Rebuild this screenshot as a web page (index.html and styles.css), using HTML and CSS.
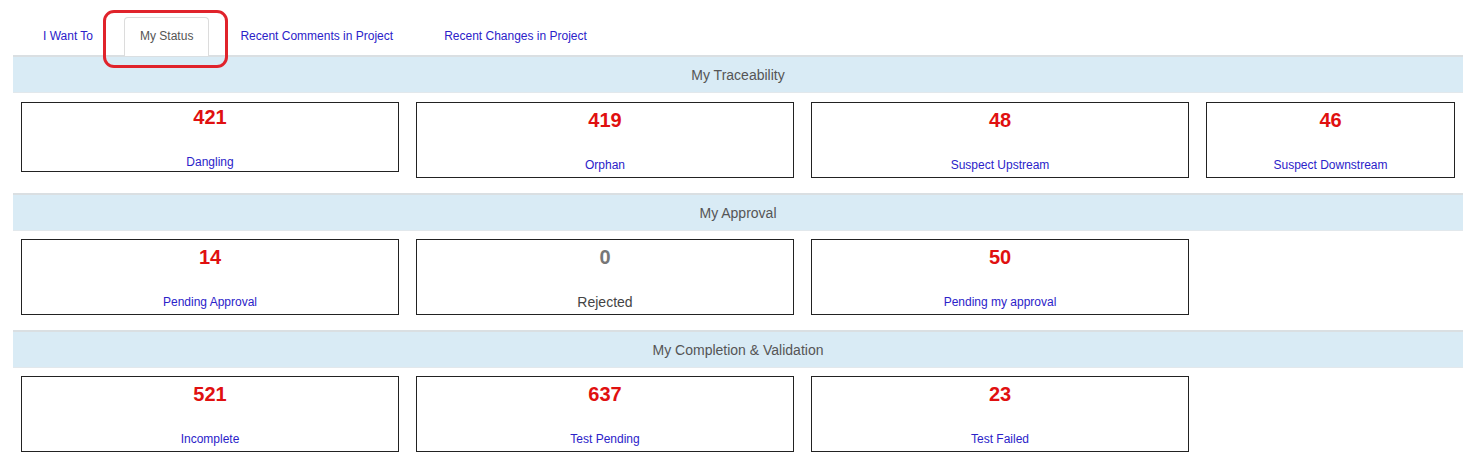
FILE: index.html
```html
<!DOCTYPE html>
<html>
<head>
<meta charset="utf-8">
<link rel="stylesheet" href="styles.css">
</head>
<body>
<div class="page">
  <div class="nav">
    <a class="tab">I Want To</a>
    <a class="tab active">My Status</a>
    <a class="tab">Recent Comments in Project</a>
    <a class="tab tab-last">Recent Changes in Project</a>
    <div class="highlight"></div>
  </div>

  <div class="section section-first">
    <div class="section-head">My Traceability</div>
    <div class="cards">
      <div class="card card-short"><div class="num">421</div><div class="label">Dangling</div></div>
      <div class="card"><div class="num">419</div><div class="label">Orphan</div></div>
      <div class="card"><div class="num">48</div><div class="label">Suspect Upstream</div></div>
      <div class="card"><div class="num">46</div><div class="label">Suspect Downstream</div></div>
    </div>
  </div>

  <div class="section">
    <div class="section-head">My Approval</div>
    <div class="cards">
      <div class="card"><div class="num">14</div><div class="label">Pending Approval</div></div>
      <div class="card"><div class="num num-zero">0</div><div class="label label-plain">Rejected</div></div>
      <div class="card"><div class="num">50</div><div class="label">Pending my approval</div></div>
    </div>
  </div>

  <div class="section">
    <div class="section-head">My Completion &amp; Validation</div>
    <div class="cards">
      <div class="card"><div class="num">521</div><div class="label">Incomplete</div></div>
      <div class="card"><div class="num">637</div><div class="label">Test Pending</div></div>
      <div class="card"><div class="num">23</div><div class="label">Test Failed</div></div>
    </div>
  </div>
</div>
</body>
</html>
```

FILE: styles.css
```css
* { box-sizing: border-box; }

body {
  margin: 0;
  background: #fff;
  font-family: "Liberation Sans", Arial, sans-serif;
}

.page {
  padding: 0 15px 0 13px;
}

.nav {
  position: relative;
  display: flex;
  gap: 15px;
  padding: 17px 0 0 14px;
  height: 55px;
}

.tab {
  display: block;
  padding: 9px 15px 11px;
  line-height: 18px;
  font-size: 12px;
  color: #2b22c9;
  border: 1px solid transparent;
  border-bottom: none;
  border-radius: 4px 4px 0 0;
  height: 38px;
  position: relative;
  z-index: 1;
}

.tab-last {
  margin-left: 4px;
}

.tab.active {
  color: #555;
  background: #fff;
  border-color: #dcdcdc;
  height: 39px;
}

.highlight {
  position: absolute;
  left: 90px;
  top: 10px;
  width: 125px;
  height: 58px;
  border: 3.5px solid #e0232b;
  border-radius: 11px;
  z-index: 2;
}

.section-head {
  height: 38px;
  background: #d9ebf5;
  border-top: 2px solid #dadfe2;
  border-bottom: 1px solid #e2e8ec;
  text-align: center;
  font-size: 14px;
  line-height: 36px;
  color: #555;
}

.cards {
  display: grid;
  grid-template-columns: 378px 378px 378px 249px;
  column-gap: 17px;
  align-items: start;
  padding: 0 8px;
  margin: 8px 0 15px;
}

.section-first .cards {
  margin-top: 9px;
}

.card {
  height: 76px;
  border: 1px solid #222;
  padding-top: 5px;
  text-align: center;
}

.card-short {
  height: 70px;
  padding-top: 2px;
}

.num {
  font-size: 20px;
  font-weight: bold;
  line-height: 24px;
  color: #e01010;
}

.num-zero {
  color: #777;
}

.label {
  margin-top: 25px;
  font-size: 12px;
  line-height: 16px;
  color: #2b22c9;
}

.label-plain {
  font-size: 14px;
  color: #444;
}
```
